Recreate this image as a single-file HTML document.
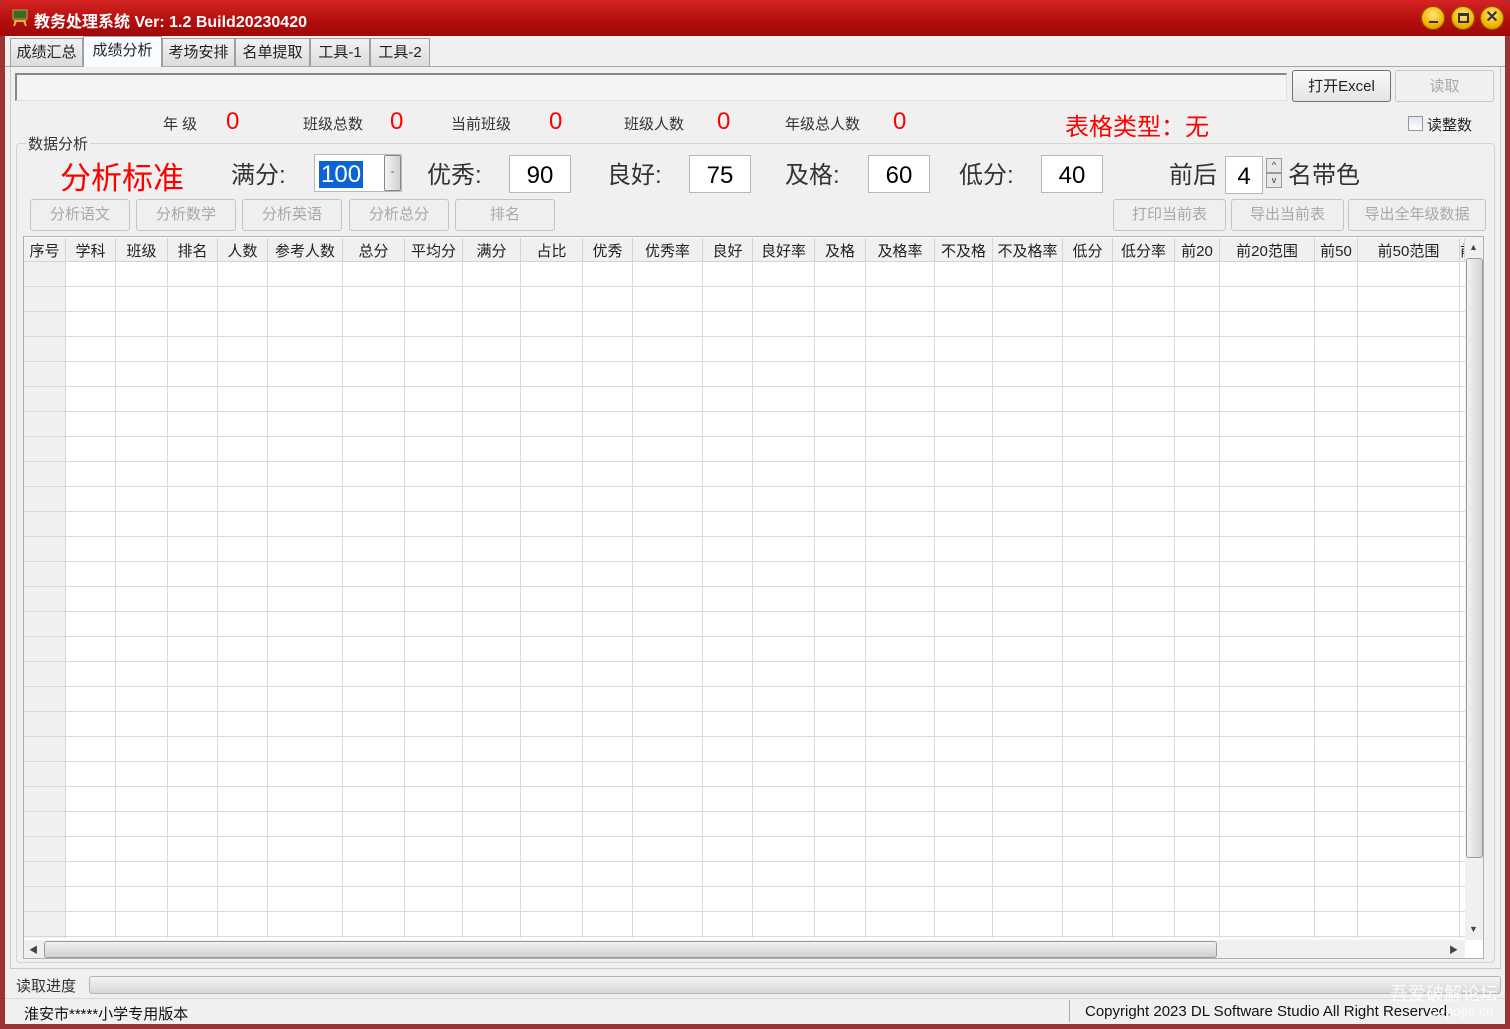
<!DOCTYPE html>
<html><head><meta charset="utf-8">
<style>
*{margin:0;padding:0;box-sizing:border-box}
body{width:1510px;height:1029px;overflow:hidden;background:#9c3434;font-family:"Liberation Sans","Noto Sans CJK SC",sans-serif;position:relative;color:#333}
.a{position:absolute}
#title{left:0;top:0;width:1510px;height:36px;background:linear-gradient(#d42424,#b30d0d 60%,#a00808);border-radius:6px 6px 0 0}
#title .t{left:34px;top:8px;color:#fff;font-weight:bold;font-size:16px;white-space:nowrap}
.wb{top:6px;width:24px;height:24px;border-radius:50%;background:radial-gradient(circle at 50% 35%,#ffe680,#f2b400 60%,#c88a00);border:1px solid #8a5a00}
#win{left:5px;top:36px;width:1500px;height:988px;background:#f0f0f0}
.tab{top:38px;height:28px;border:1px solid #a0a0a0;border-bottom:none;background:linear-gradient(#f2f2f2,#dcdcdc);font-size:15px;text-align:center;line-height:28px;color:#222}
.lbl{font-size:15px;color:#333;white-space:nowrap}
.red{color:#f00;font-size:24px}
.big{font-size:24px;color:#333;white-space:nowrap}
.box{background:#fff;border:1px solid #b8b8b8;font-size:24px;color:#000;text-align:center;line-height:40px;height:38px}
.btn{top:199px;height:32px;border:1px solid #c4c4c4;border-radius:3px;background:#efefef;color:#a8a8a8;font-size:15px;text-align:center;line-height:30px}
.hc{top:238px;height:24px;background:#f0f0f0;border-right:1px solid #d4d4d4;border-bottom:1px solid #d4d4d4;font-size:15px;text-align:center;line-height:27px;color:#222;overflow:hidden;white-space:nowrap}
.col{top:262px;height:676px;border-right:1px solid #dadada}
</style></head><body>
<div id="title" class="a">
 <svg class="a" style="left:11px;top:9px" width="18" height="18"><rect x="2" y="1" width="14" height="9" fill="#3a6a2a" stroke="#c8a040"/><path d="M3 12 L15 12 M5 12 L3 17 M13 12 L15 17" stroke="#e0b040" stroke-width="2"/></svg>
 <div class="a t">教务处理系统 Ver: 1.2 Build20230420</div>
 <div class="a wb" style="left:1421px"><div class="a" style="left:7px;top:14px;width:9px;height:2px;background:#333"></div></div>
 <div class="a wb" style="left:1451px"><div class="a" style="left:6px;top:6px;width:11px;height:10px;border:2px solid #333;border-top-width:3px"></div></div>
 <div class="a wb" style="left:1480px;font-weight:bold;font-size:16px;color:#333;text-align:center;line-height:22px">✕</div>
</div>
<div id="win" class="a"></div>
<div class="a" style="left:5px;top:66px;width:1500px;height:1px;background:#a8a8a8"></div>
<div class="a tab" style="left:10px;width:73px">成绩汇总</div>
<div class="a tab" style="left:83px;top:36px;height:31px;width:79px;background:#f8fbff">成绩分析</div>
<div class="a tab" style="left:162px;width:73px">考场安排</div>
<div class="a tab" style="left:235px;width:75px">名单提取</div>
<div class="a tab" style="left:310px;width:60px">工具-1</div>
<div class="a tab" style="left:370px;width:60px">工具-2</div>
<div class="a" style="left:10px;top:67px;width:1491px;height:902px;border:1px solid #c8c8c8;border-top:none"></div>
<div class="a" style="left:15px;top:73px;width:1272px;height:28px;background:#f4f4f4;border:1px solid #aaa;border-right-color:#e0e0e0;border-bottom-color:#e0e0e0;border-top:2px solid #888;border-left:2px solid #888"></div>
<div class="a" style="left:1292px;top:70px;width:99px;height:32px;border:1px solid #707070;border-radius:3px;background:linear-gradient(#fafafa,#e4e4e4);font-size:15px;text-align:center;line-height:32px;color:#222">打开Excel</div>
<div class="a" style="left:1395px;top:70px;width:99px;height:32px;border:1px solid #c8c8c8;border-radius:3px;background:#f0f0f0;font-size:15px;text-align:center;line-height:32px;color:#aaa">读取</div>
<div class="a lbl" style="left:163px;top:113px">年&nbsp;级</div><div class="a red" style="left:226px;top:108px">0</div>
<div class="a lbl" style="left:303px;top:113px">班级总数</div><div class="a red" style="left:390px;top:108px">0</div>
<div class="a lbl" style="left:451px;top:113px">当前班级</div><div class="a red" style="left:549px;top:108px">0</div>
<div class="a lbl" style="left:624px;top:113px">班级人数</div><div class="a red" style="left:717px;top:108px">0</div>
<div class="a lbl" style="left:785px;top:113px">年级总人数</div><div class="a red" style="left:893px;top:108px">0</div>
<div class="a red" style="left:1065px;top:107px">表格类型：无</div>
<div class="a" style="left:1408px;top:116px;width:15px;height:15px;border:1px solid #8a98a8;background:linear-gradient(#e0e6ee,#fff)"></div>
<div class="a lbl" style="left:1427px;top:114px;color:#222">读整数</div>
<div class="a" style="left:16px;top:143px;width:1479px;height:820px;border:1px solid #d4d4d0;border-radius:4px"></div>
<div class="a lbl" style="left:26px;top:133px;background:#f0f0f0;padding:0 2px">数据分析</div>
<div class="a" style="left:60px;top:153px;font-size:31px;color:#f00;white-space:nowrap">分析标准</div>
<div class="a big" style="left:231px;top:155px">满分:</div>
<div class="a box" style="left:314px;top:154px;width:88px;text-align:left"><span style="background:#0a64d6;color:#fff;margin-left:4px;padding:0 2px">100</span></div>
<div class="a" style="left:384px;top:155px;width:17px;height:36px;border:1px solid #888;border-radius:2px;background:linear-gradient(90deg,#f4f4f4,#d0d0d0);font-size:10px;text-align:center;line-height:34px">-</div>
<div class="a big" style="left:427px;top:155px">优秀:</div><div class="a box" style="left:509px;top:155px;width:62px">90</div>
<div class="a big" style="left:607px;top:155px">良好:</div><div class="a box" style="left:689px;top:155px;width:62px">75</div>
<div class="a big" style="left:785px;top:155px">及格:</div><div class="a box" style="left:868px;top:155px;width:62px">60</div>
<div class="a big" style="left:959px;top:155px">低分:</div><div class="a box" style="left:1041px;top:155px;width:62px">40</div>
<div class="a big" style="left:1169px;top:155px">前后</div><div class="a box" style="left:1225px;top:156px;width:38px">4</div>
<div class="a" style="left:1266px;top:158px;width:16px;height:15px;border:1px solid #999;background:#e8e8e8;font-size:9px;text-align:center;line-height:13px">^</div>
<div class="a" style="left:1266px;top:173px;width:16px;height:15px;border:1px solid #999;background:#e8e8e8;font-size:9px;text-align:center;line-height:13px">v</div>
<div class="a big" style="left:1288px;top:155px">名带色</div>
<div class="a btn" style="left:30px;width:100px">分析语文</div>
<div class="a btn" style="left:136px;width:100px">分析数学</div>
<div class="a btn" style="left:242px;width:100px">分析英语</div>
<div class="a btn" style="left:349px;width:100px">分析总分</div>
<div class="a btn" style="left:455px;width:100px">排名</div>
<div class="a btn" style="left:1113px;width:113px">打印当前表</div>
<div class="a btn" style="left:1231px;width:113px">导出当前表</div>
<div class="a btn" style="left:1348px;width:138px">导出全年级数据</div>
<div class="a" style="left:23px;top:236px;width:1461px;height:723px;border:1px solid #b0b0b0;background:#fff"></div>
<div class="a" style="left:24px;top:262px;width:1441px;height:676px;background:repeating-linear-gradient(to bottom,transparent 0 24px,#dadada 24px 25px)"></div>
<div class="a" style="left:24px;top:262px;width:42px;height:676px;background:repeating-linear-gradient(to bottom,#f0f0f0 0 24px,#d8d8d8 24px 25px);border-right:1px solid #d4d4d4"></div>
<div class="a hc" style="left:24px;width:42px">序号</div>
<div class="a hc" style="left:66px;width:50px">学科</div><div class="a col" style="left:66px;width:50px"></div>
<div class="a hc" style="left:116px;width:52px">班级</div><div class="a col" style="left:116px;width:52px"></div>
<div class="a hc" style="left:168px;width:50px">排名</div><div class="a col" style="left:168px;width:50px"></div>
<div class="a hc" style="left:218px;width:50px">人数</div><div class="a col" style="left:218px;width:50px"></div>
<div class="a hc" style="left:268px;width:75px">参考人数</div><div class="a col" style="left:268px;width:75px"></div>
<div class="a hc" style="left:343px;width:62px">总分</div><div class="a col" style="left:343px;width:62px"></div>
<div class="a hc" style="left:405px;width:58px">平均分</div><div class="a col" style="left:405px;width:58px"></div>
<div class="a hc" style="left:463px;width:58px">满分</div><div class="a col" style="left:463px;width:58px"></div>
<div class="a hc" style="left:521px;width:62px">占比</div><div class="a col" style="left:521px;width:62px"></div>
<div class="a hc" style="left:583px;width:50px">优秀</div><div class="a col" style="left:583px;width:50px"></div>
<div class="a hc" style="left:633px;width:70px">优秀率</div><div class="a col" style="left:633px;width:70px"></div>
<div class="a hc" style="left:703px;width:50px">良好</div><div class="a col" style="left:703px;width:50px"></div>
<div class="a hc" style="left:753px;width:62px">良好率</div><div class="a col" style="left:753px;width:62px"></div>
<div class="a hc" style="left:815px;width:51px">及格</div><div class="a col" style="left:815px;width:51px"></div>
<div class="a hc" style="left:866px;width:69px">及格率</div><div class="a col" style="left:866px;width:69px"></div>
<div class="a hc" style="left:935px;width:58px">不及格</div><div class="a col" style="left:935px;width:58px"></div>
<div class="a hc" style="left:993px;width:70px">不及格率</div><div class="a col" style="left:993px;width:70px"></div>
<div class="a hc" style="left:1063px;width:50px">低分</div><div class="a col" style="left:1063px;width:50px"></div>
<div class="a hc" style="left:1113px;width:62px">低分率</div><div class="a col" style="left:1113px;width:62px"></div>
<div class="a hc" style="left:1175px;width:45px">前20</div><div class="a col" style="left:1175px;width:45px"></div>
<div class="a hc" style="left:1220px;width:95px">前20范围</div><div class="a col" style="left:1220px;width:95px"></div>
<div class="a hc" style="left:1315px;width:43px">前50</div><div class="a col" style="left:1315px;width:43px"></div>
<div class="a hc" style="left:1358px;width:102px">前50范围</div><div class="a col" style="left:1358px;width:102px"></div>
<div class="a hc" style="left:1460px;width:5px;text-align:left">前</div>
<div class="a" style="left:1465px;top:237px;width:18px;height:703px;background:#f0f0f0"></div>
<div class="a" style="left:1466px;top:258px;width:17px;height:600px;border:1px solid #999;border-radius:3px;background:linear-gradient(90deg,#f2f2f2,#d4d4d4)"></div>
<div class="a" style="left:1469px;top:242px;font-size:9px;color:#444">▲</div>
<div class="a" style="left:1469px;top:924px;font-size:9px;color:#444">▼</div>
<div class="a" style="left:24px;top:940px;width:1441px;height:18px;background:#f0f0f0"></div>
<div class="a" style="left:44px;top:941px;width:1173px;height:17px;border:1px solid #999;border-radius:3px;background:linear-gradient(#f2f2f2,#d0d0d0)"></div>
<div class="a" style="left:29px;top:943px;font-size:9px;color:#444">◀</div>
<div class="a" style="left:1449px;top:943px;font-size:9px;color:#444">▶</div>
<div class="a lbl" style="left:16px;top:975px">读取进度</div>
<div class="a" style="left:89px;top:976px;width:1412px;height:18px;border:1px solid #b4b4b4;border-radius:3px;background:linear-gradient(#f4f4f4,#d8d8d8)"></div>
<div class="a" style="left:5px;top:998px;width:1500px;height:26px;background:#f0f0f0;border-top:1px solid #d8d8d8"></div>
<div class="a lbl" style="left:24px;top:1003px;color:#111">淮安市*****小学专用版本</div>
<div class="a" style="left:1069px;top:1000px;width:1px;height:22px;background:#aaa"></div>
<div class="a lbl" style="left:1085px;top:1003px;color:#111">Copyright 2023 DL Software Studio All Right Reserved.</div>
<div class="a" style="left:1390px;top:980px;font-size:18px;color:rgba(255,255,255,.85);white-space:nowrap">吾爱破解论坛</div>
<div class="a" style="left:1430px;top:1003px;font-size:14px;color:rgba(255,255,255,.8)">52pojie.cn</div>
</body></html>
